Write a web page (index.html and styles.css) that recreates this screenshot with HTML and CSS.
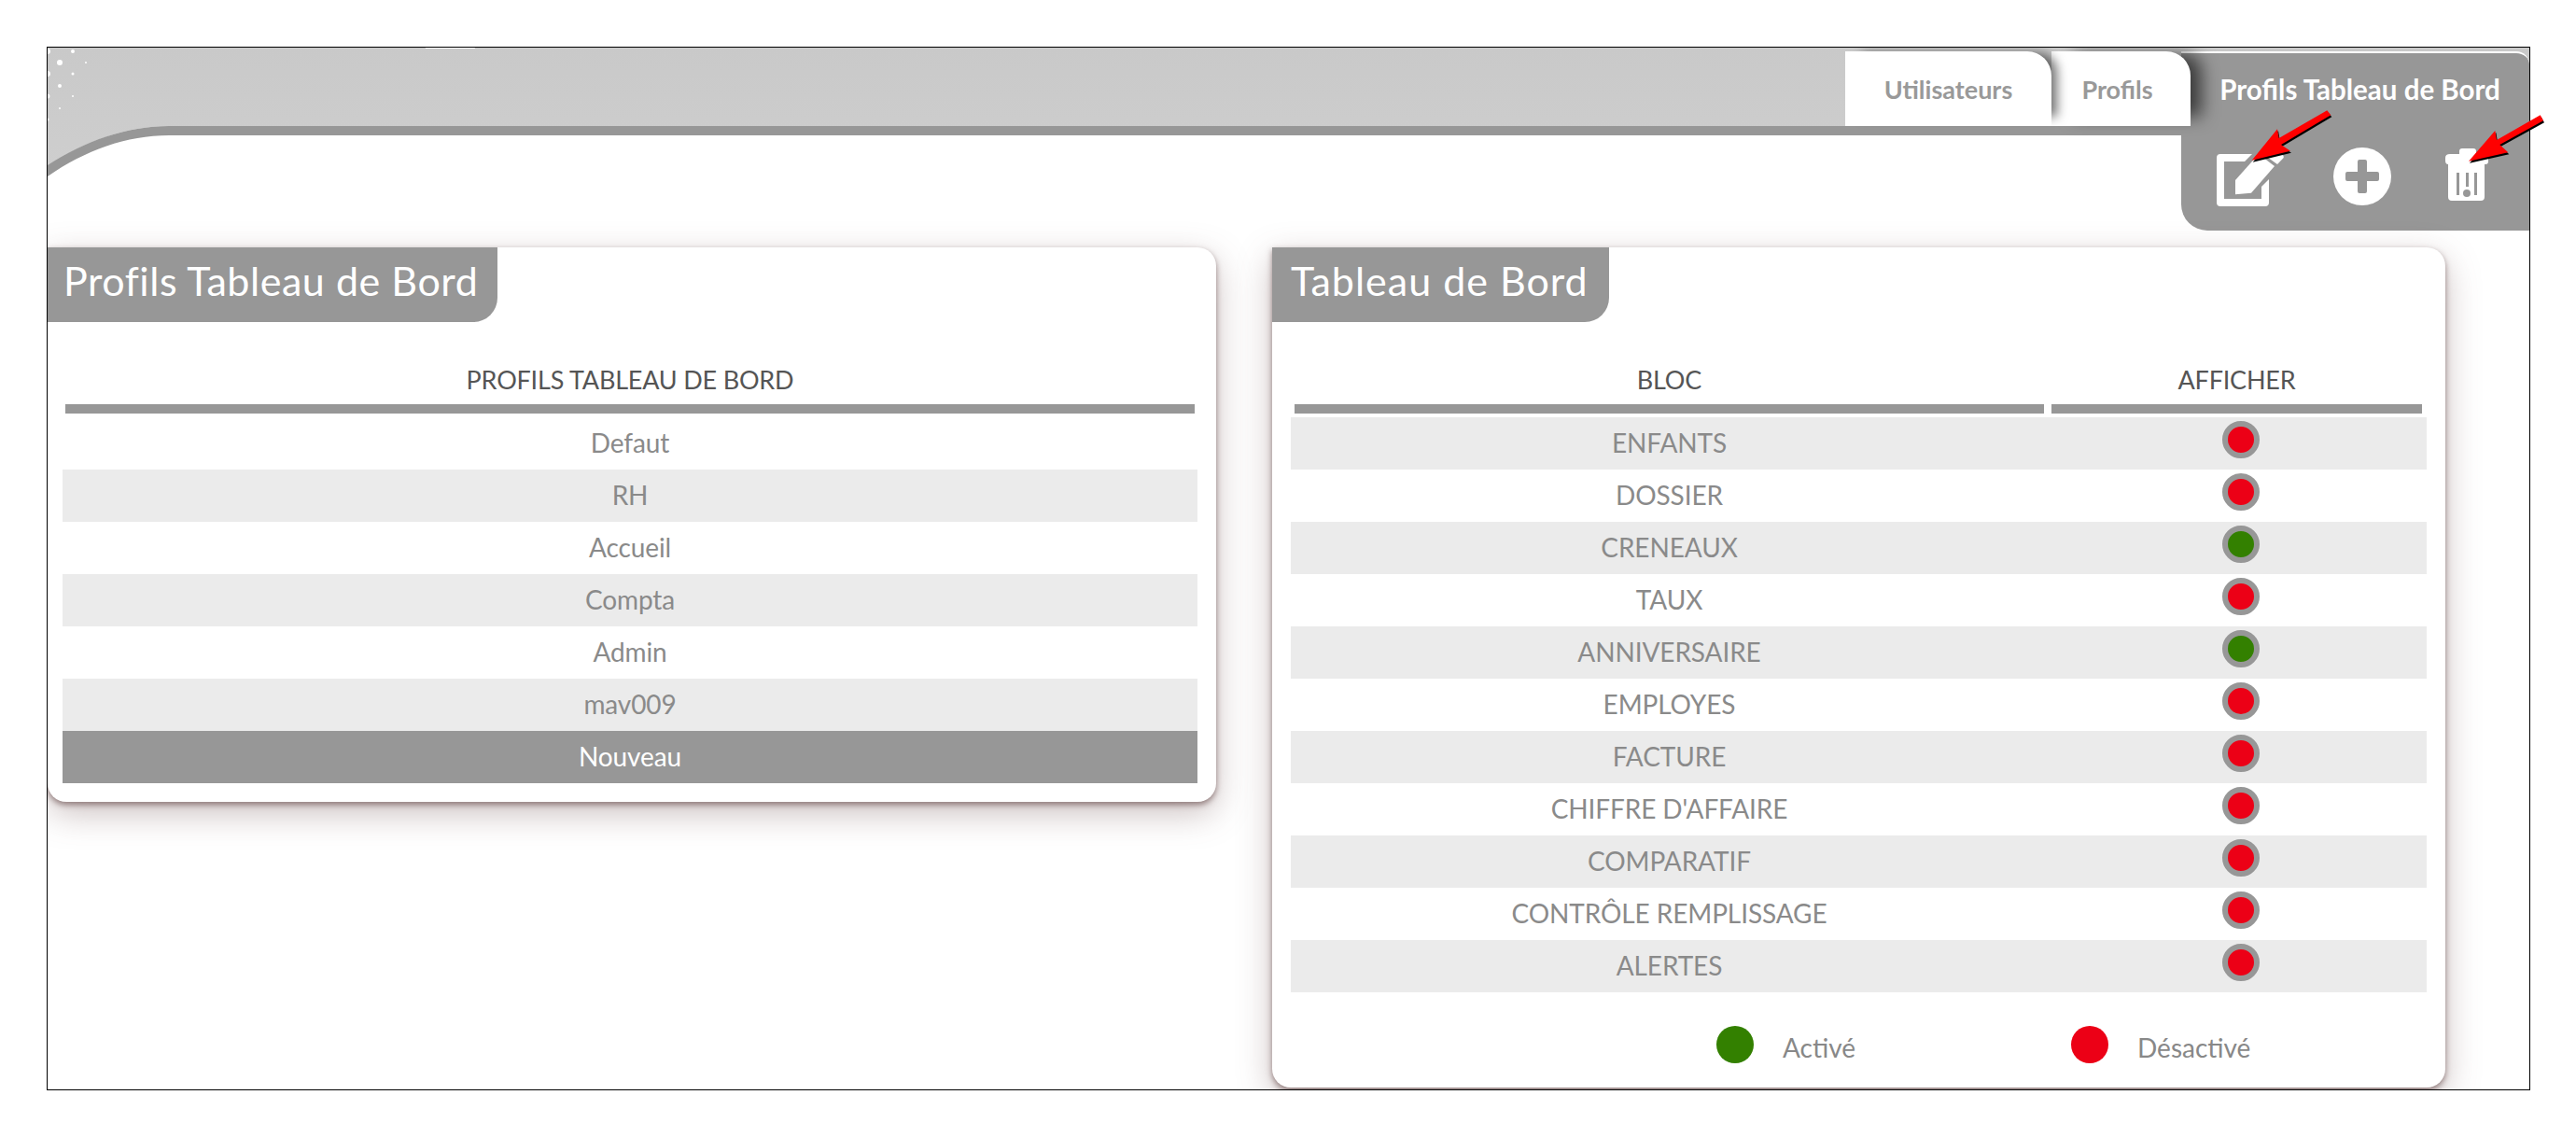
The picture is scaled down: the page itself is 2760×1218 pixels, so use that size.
FILE: index.html
```html
<!DOCTYPE html>
<html lang="fr">
<head>
<meta charset="utf-8">
<title>Profils Tableau de Bord</title>
<link rel="stylesheet" href="styles.css">
</head>
<body>
<div class="frame">
  <header class="top">
    <svg class="top-bg" viewBox="0 0 2660 140" preserveAspectRatio="none" aria-hidden="true">
      <defs><linearGradient id="band" x1="0" y1="0" x2="0" y2="1"><stop offset="0" stop-color="#c9c9c9"/><stop offset="1" stop-color="#cecece"/></linearGradient></defs>
      <path d="M0 0H2660V84H130C85 84 40 100 0 127Z" fill="url(#band)"/>
      <path d="M0 126C40 100 85 84 130 84H2660V94H130C85 94 40 110 0 138Z" fill="#979797"/>
      <g fill="#fff">
        <circle cx="0" cy="4" r="3"/><circle cx="27" cy="4" r="2"/><circle cx="13" cy="16" r="3"/><circle cx="41" cy="16" r="1"/>
        <circle cx="27" cy="28" r="1.5"/><circle cx="0" cy="28" r="3"/><circle cx="13" cy="41" r="2"/>
        <circle cx="27" cy="52" r="1"/><circle cx="0" cy="52" r="2.5"/><circle cx="13" cy="65" r="1"/><circle cx="0" cy="77" r="1.5"/>
      </g>
      <rect x="405" y="0" width="53" height="1" fill="#fff"/>
    </svg>
    <nav class="tabs">
      <a class="tab tab-first">Utilisateurs</a>
      <a class="tab tab-second">Profils</a>
      <div class="tab-active">
        <span class="tab-active-label">Profils Tableau de Bord</span>
        <div class="tools">
          <svg class="tool-edit" viewBox="0 0 72 62" aria-hidden="true">
            <path d="M4 6H38L30 14H8V54H48V41L56 33V58Q56 62 52 62H4Q0 62 0 58V10Q0 6 4 6Z" fill="#fff"/>
            <path d="M20 34L45 6L62 19L37 47.7L20 49.3Z" fill="#fff"/>
            <path d="M51 7H70Q72 7 71.7 10L65 17Z" fill="#fff"/>
          </svg>
          <svg class="tool-plus" viewBox="0 0 62 62" aria-hidden="true">
            <circle cx="31" cy="31" r="31" fill="#fff"/>
            <path d="M26 15Q26 13 28 13H34Q36 13 36 15V26H47Q49 26 49 28V34Q49 36 47 36H36V47Q36 49 34 49H28Q26 49 26 47V36H15Q13 36 13 34V28Q13 26 15 26H26Z" fill="#979797"/>
          </svg>
          <svg class="tool-trash" viewBox="0 0 46 56" aria-hidden="true">
            <path d="M15 3Q15 0 18 0H30Q33 0 33 3V6H41Q46 6 46 11V14Q46 17 43 17H42V52Q42 56 38 56H7Q3 56 3 52V17Q0 17 0 13V10Q0 6 5 6H15Z" fill="#fff"/>
            <rect x="12" y="26" width="3" height="24" fill="#979797"/>
            <rect x="31" y="26" width="3" height="24" fill="#979797"/>
            <rect x="22" y="26" width="3" height="15" fill="#979797"/>
            <circle cx="23" cy="48" r="4" fill="#979797"/>
          </svg>
        </div>
      </div>
    </nav>
  </header>
  <main class="content">
    <section class="card card-profiles">
      <h2 class="card-title">Profils Tableau de Bord</h2>
      <div class="table">
        <div class="head"><div class="head-cell">PROFILS TABLEAU DE BORD</div></div>
        <div class="row">Defaut</div>
        <div class="row row-alt">RH</div>
        <div class="row">Accueil</div>
        <div class="row row-alt">Compta</div>
        <div class="row">Admin</div>
        <div class="row row-alt">mav009</div>
        <div class="row row-new">Nouveau</div>
      </div>
    </section>
    <section class="card card-board">
      <h2 class="card-title">Tableau de Bord</h2>
      <div class="table">
        <div class="head head-two"><div class="head-cell">BLOC</div><div class="head-cell">AFFICHER</div></div>
        <div class="row row-two row-alt"><span>ENFANTS</span><i class="dot off"></i></div>
        <div class="row row-two"><span>DOSSIER</span><i class="dot off"></i></div>
        <div class="row row-two row-alt"><span>CRENEAUX</span><i class="dot on"></i></div>
        <div class="row row-two"><span>TAUX</span><i class="dot off"></i></div>
        <div class="row row-two row-alt"><span>ANNIVERSAIRE</span><i class="dot on"></i></div>
        <div class="row row-two"><span>EMPLOYES</span><i class="dot off"></i></div>
        <div class="row row-two row-alt"><span>FACTURE</span><i class="dot off"></i></div>
        <div class="row row-two"><span>CHIFFRE D'AFFAIRE</span><i class="dot off"></i></div>
        <div class="row row-two row-alt"><span>COMPARATIF</span><i class="dot off"></i></div>
        <div class="row row-two"><span>CONTRÔLE REMPLISSAGE</span><i class="dot off"></i></div>
        <div class="row row-two row-alt"><span>ALERTES</span><i class="dot off"></i></div>
      </div>
      <div class="legend">
        <div class="legend-item"><i class="swatch on"></i><span>Activé</span></div>
        <div class="legend-item"><i class="swatch off"></i><span>Désactivé</span></div>
      </div>
    </section>
  </main>
</div>
<svg class="arrows" viewBox="0 0 2760 1218" aria-hidden="true">
  <g fill="#000" transform="translate(1 2)">
    <path d="M2493.3 118.3L2497.3 123.3L2444 155L2454 161.7L2412.7 171.7L2440 138.3L2441.7 148Z"/>
    <path d="M2721.7 123.3L2725 129.3L2678.3 155L2687.3 163.3L2645 172.7L2673.3 140L2675 150Z"/>
  </g>
  <g fill="#f00">
    <path d="M2493.3 118.3L2497.3 123.3L2444 155L2454 161.7L2412.7 171.7L2440 138.3L2441.7 148Z"/>
    <path d="M2721.7 123.3L2725 129.3L2678.3 155L2687.3 163.3L2645 172.7L2673.3 140L2675 150Z"/>
  </g>
</svg>
</body>
</html>
```
FILE: styles.css
```css
* { box-sizing: border-box; }
html, body { margin: 0; padding: 0; background: #fff; }
body { font-family: Lato, "Open Sans", sans-serif; width: 2760px; height: 1218px; overflow: hidden; position: relative; }
.frame { margin: 50px 0 0 50px; width: 2661px; height: 1118px; border: 1px solid #000; overflow: hidden; background: #fff; }
.top { position: relative; height: 197px; }
.top-bg { position: absolute; left: 0; top: 0; width: 100%; height: 140px; display: block; }
.tabs { position: relative; display: flex; justify-content: flex-end; align-items: flex-start; padding-top: 4px; }
.tab { display: flex; justify-content: center; align-items: center; height: 80px; background: #fff; color: #999; font-weight: 700; font-size: 27px; border-radius: 0 26px 0 0; }
.tab-first { width: 221px; position: relative; z-index: 2; box-shadow: 12px -4px 12px -6px rgba(0,0,0,.55); }
.tab-second { width: 149px; position: relative; z-index: 1; padding-right: 8px; box-shadow: 18px -4px 18px -6px rgba(0,0,0,.6); }
.tab-active { position: relative; width: 373px; height: 192px; margin-left: -10px; padding-left: 10px; background: #979797; border-top: 2px solid #fff; border-radius: 0 14px 0 28px; color: #fff; font-weight: 700; font-size: 29.5px; }
.tab-active-label { display: block; text-align: center; padding-top: 21px; height: 52px; line-height: 36px; white-space: nowrap; }
.tools { display: flex; align-items: flex-start; margin-top: 49px; }
.tool-edit { width: 72px; height: 62px; margin-left: 28px; margin-top: 1px; }
.tool-plus { width: 62px; height: 62px; margin-left: 53px; }
.tool-trash { width: 46px; height: 56px; margin-left: 58px; margin-top: 1px; }
.content { display: flex; align-items: flex-start; margin-top: 17px; }
.card { background: #fff; border-radius: 0 20px 20px 20px; box-shadow: 0 12px 36px rgba(110,80,80,.36), 0 3px 6px rgba(90,60,60,.6); position: relative; flex: none; }
.card-profiles { width: 1252px; height: 594px; padding: 0 20px 0 16px; }
.card-board { width: 1257px; height: 900px; margin-left: 60px; padding: 0 20px; }
.card-title { margin: 0 0 0 -16px; height: 80px; width: fit-content; background: #979797; color: #fff; font-weight: 400; font-size: 43px; line-height: 72px; letter-spacing: .55px; padding: 0 21px 0 17px; border-radius: 0 0 26px 0; white-space: nowrap; }
.card-board .card-title { margin-left: -20px; padding: 0 22px 0 20px; letter-spacing: 1px; }
.head { height: 102px; display: flex; justify-content: center; padding: 0 3px; }
.head-cell { flex: 1; height: 98px; padding-top: 42px; border-bottom: 10px solid #979797; font-size: 27px; letter-spacing: -.2px; line-height: 40px; color: #555; text-align: center; white-space: nowrap; }
.head-two { gap: 8px; padding: 0 5px 0 4px; }
.head-two .head-cell:first-child { flex: none; width: 803px; }
.row { height: 56px; display: flex; justify-content: center; align-items: center; font-size: 28px; letter-spacing: -.1px; color: #8a8a8a; padding-bottom: 2px; }
.row-alt { background: #ebebeb; }
.row-new { background: #979797; color: #fff; }
.row-two { display: grid; grid-template-columns: 811px 1fr; padding: 0; justify-items: center; }
.row-two span { padding-bottom: 2px; }
.dot { display: block; width: 40px; height: 40px; border-radius: 50%; border: 6px solid #979797; margin: -8px 0 0 8px; }
.dot.off, .swatch.off { background: #ec0016; }
.dot.on, .swatch.on { background: #338000; }
.legend { display: grid; grid-template-columns: 380px 1fr; padding: 36px 0 0 456px; }
.legend-item { display: flex; align-items: flex-start; font-size: 28px; color: #888; }
.legend-item span { margin-left: 31px; margin-top: 3px; line-height: 40px; }
.swatch { display: block; width: 40px; height: 40px; border-radius: 50%; flex: none; }
.arrows { position: absolute; left: 0; top: 0; width: 2760px; height: 1218px; pointer-events: none; }
```
